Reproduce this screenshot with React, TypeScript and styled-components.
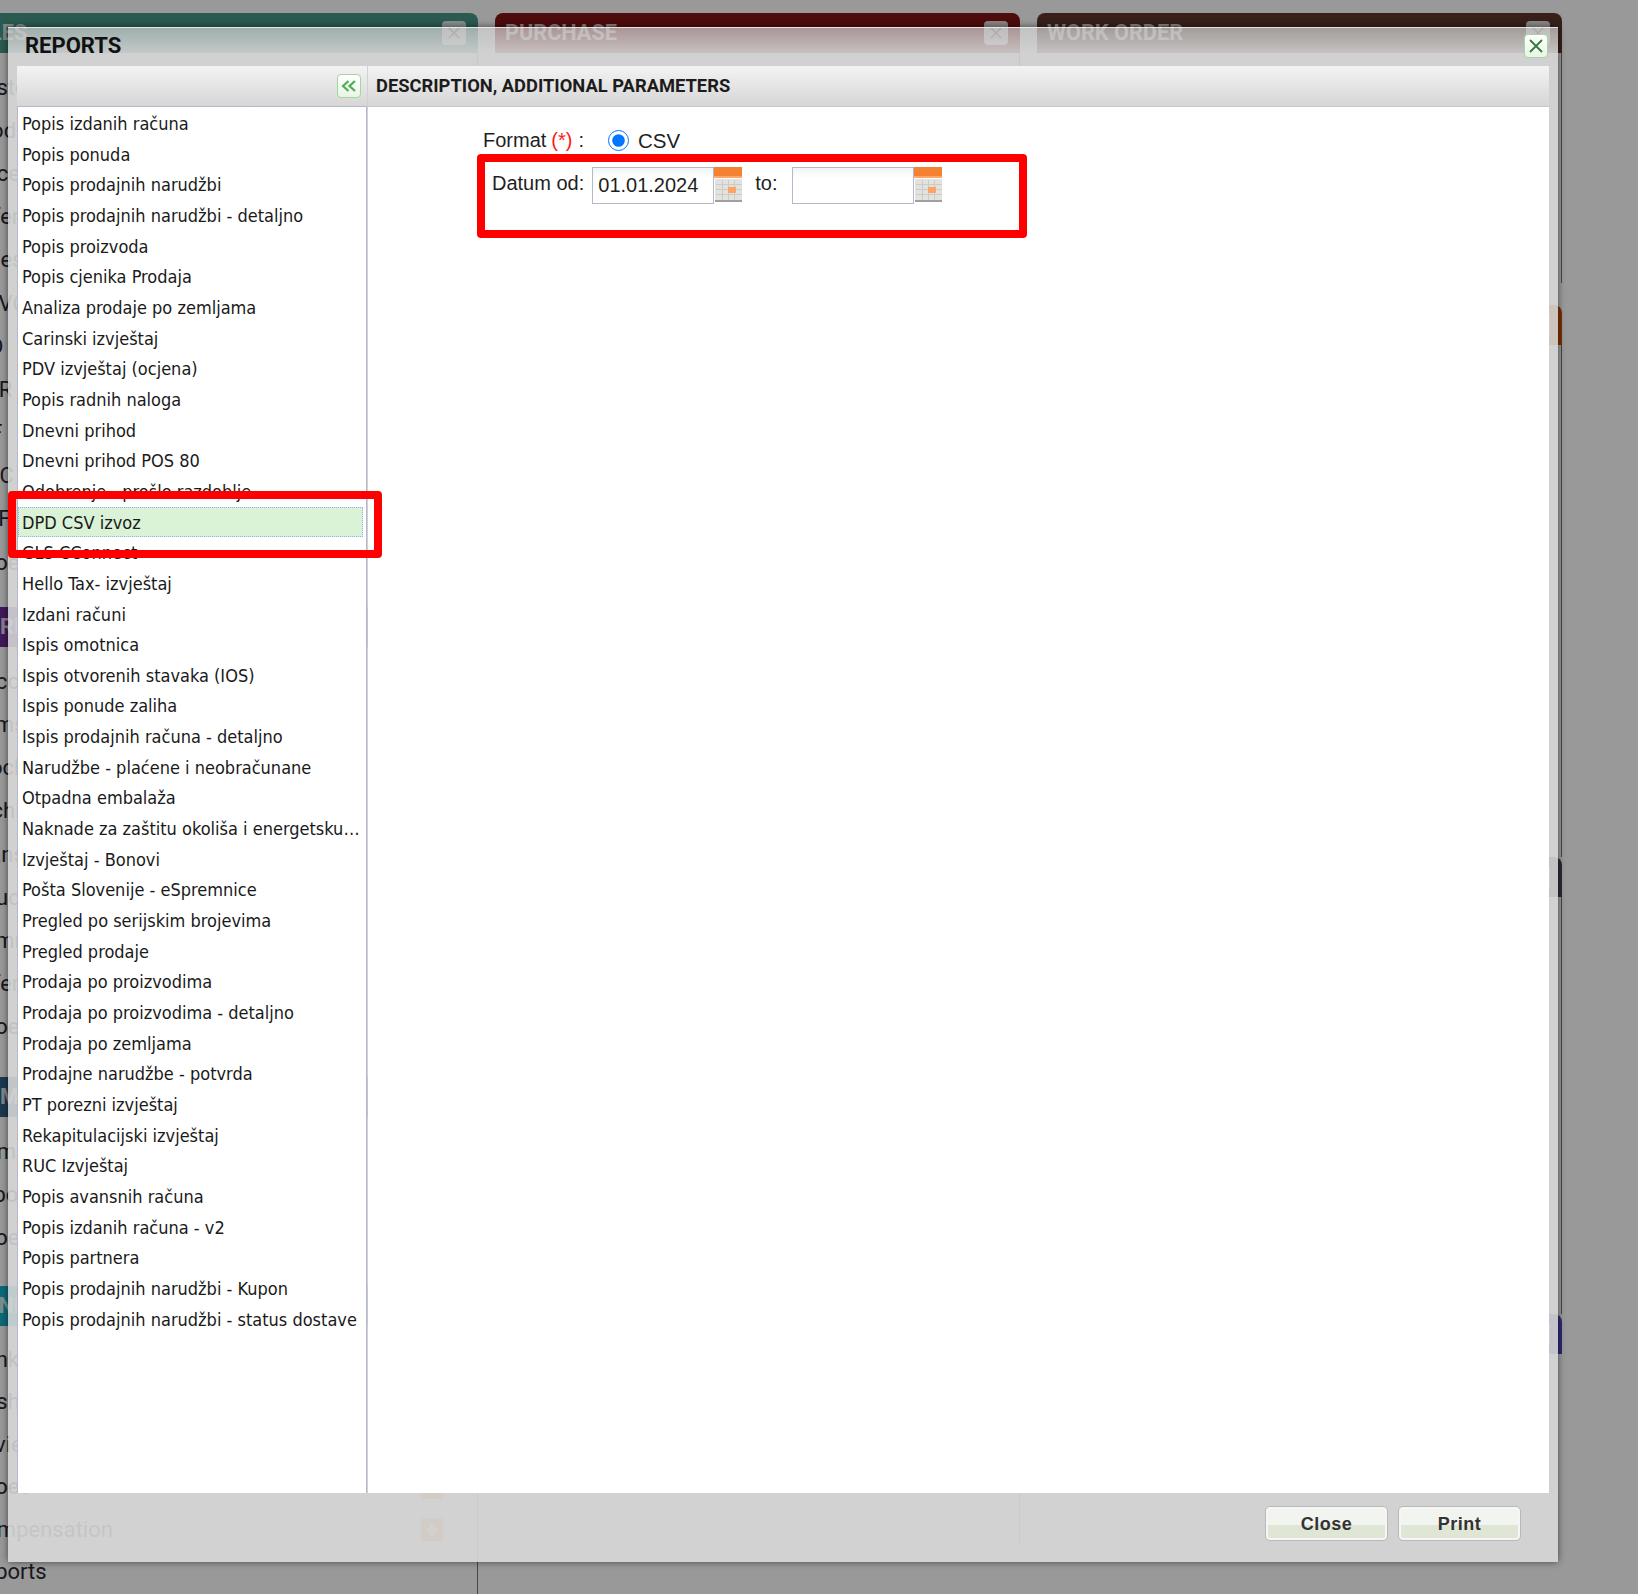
import React from "react";
import styled, { createGlobalStyle } from "styled-components";

const Global = createGlobalStyle`
  html, body { margin: 0; padding: 0; background: #fff; }
  body { width: 1638px; height: 1594px; overflow: hidden; font-family: Roboto, "Liberation Sans", sans-serif; }
`;

const Page = styled.div`
  position: relative;
  width: 1638px;
  height: 1594px;
  overflow: hidden;
  background: #fff;
`;
const Columns = styled.div`
  display: grid;
  grid-template-columns: 508px 525px 525px;
  column-gap: 17px;
  align-items: start;
  margin-left: -30px;
  padding-top: 13px;
`;
const Column = styled.div`
  display: flex;
  flex-direction: column;
`;
const Section = styled.section<{ $gap?: number }>`
  display: flex;
  flex-direction: column;
  margin-bottom: ${(p) => p.$gap ?? 22}px;
`;
const SectionBar = styled.div<{ $color: string }>`
  height: 40px;
  border-radius: 8px 8px 0 0;
  background: ${(p) => p.$color};
  color: #fff;
  font: 700 21.7px/38px Roboto, sans-serif;
  padding: 0 10px;
  display: flex;
  align-items: center;
  justify-content: space-between;
  flex: none;
`;
const BarTitle = styled.span<{ $shift?: number }>`
  margin-left: ${(p) => p.$shift ?? 0}px;
  opacity: 0.8;
`;
const BarClose = styled.span`
  width: 24px;
  height: 24px;
  border-radius: 4px;
  background: rgba(255, 255, 255, 0.85);
  display: flex;
  align-items: center;
  justify-content: center;
  color: #777;
  margin-right: 2px;
`;
const SectionBody = styled.div<{ $height?: number; $open?: boolean }>`
  display: flex;
  flex-direction: column;
  padding: 13px 0 6px;
  border-right: ${(p) => (p.$open ? "none" : "1px solid #777")};
  min-height: ${(p) => p.$height ?? 0}px;
`;
const Row = styled.div<{ $height: number }>`
  height: ${(p) => p.$height}px;
  flex: none;
  display: flex;
  align-items: center;
  justify-content: space-between;
  padding-right: 34px;
  font: 400 22px/1 Roboto, sans-serif;
  color: #2a2a35;
`;
const PlusButton = styled.span`
  width: 22px;
  height: 23px;
  border-radius: 3px;
  background: #ff9a40;
  color: #fff;
  display: flex;
  align-items: center;
  justify-content: center;
  font-weight: 700;
  font-size: 22px;
`;

const Overlay = styled.div`
  position: absolute;
  inset: 0;
  background: rgba(0, 0, 0, 0.4);
`;

const Dialog = styled.div`
  position: absolute;
  left: 8px;
  top: 27px;
  width: 1550px;
  height: 1535px;
  display: flex;
  flex-direction: column;
  box-shadow: 0 0 7px rgba(0, 0, 0, 0.55);
  border-radius: 3px;
`;
const TitleBar = styled.div`
  height: 39px;
  flex: none;
  display: flex;
  align-items: center;
  justify-content: space-between;
  padding: 0 10px 2px 17px;
  border-top: 1px solid rgba(255, 255, 255, 0.55);
  box-sizing: border-box;
  background: linear-gradient(rgba(214, 214, 214, 0.68), rgba(216, 216, 216, 0.88) 65%, rgba(216, 216, 216, 0.88));
`;
const Title = styled.h1`
  margin: 0;
  font: 700 22px/1 Roboto, sans-serif;
  color: #111;
`;
const IconButton = styled.button`
  width: 24px;
  height: 24px;
  padding: 0;
  border-radius: 4px;
  border: 1px solid #a6d6a0;
  background: linear-gradient(#ffffff, #e9f4e6);
  display: flex;
  align-items: center;
  justify-content: center;
  color: #2f7a3d;
`;
const Body = styled.div`
  flex: 1;
  min-height: 0;
  display: grid;
  grid-template-columns: 350px 1fr;
  column-gap: 1px;
  padding: 0 9px;
  background: rgba(216, 216, 216, 0.88);
`;
const Pane = styled.div`
  display: flex;
  flex-direction: column;
  min-height: 0;
  background: #fff;
`;
const PaneHeader = styled.div`
  height: 41px;
  flex: none;
  box-sizing: border-box;
  display: flex;
  align-items: center;
  background: linear-gradient(#f3f3f3, #d6d6d6);
  border-bottom: 1px solid #c9c9c9;
`;
const ListHeader = styled(PaneHeader)`
  justify-content: flex-end;
  padding-right: 6px;
  border-bottom: 1px solid #b5b8cc;
`;
const DetailHeader = styled(PaneHeader)`
  padding-left: 8px;
  font: 700 18.33px/1 Roboto, sans-serif;
  color: #1c1c1c;
`;
const List = styled.div`
  flex: 1;
  padding-top: 1px;
  border-left: 1px solid #b5b8cc;
  border-right: 1px solid #b5b8cc;
  display: flex;
  flex-direction: column;
`;
const ListRow = styled.div<{ $selected?: boolean }>`
  position: relative;
  height: 30.67px;
  flex: none;
  box-sizing: border-box;
  margin-right: 3px;
  padding: 0 1px 0 4px;
  font: 400 18px/31px "DejaVu Sans Condensed", "DejaVu Sans", sans-serif;
  font-stretch: condensed;
  color: #1a1a1a;
  white-space: nowrap;
  overflow: ${(p) => (p.$selected ? "visible" : "hidden")};
  text-overflow: ellipsis;
  background: ${(p) => (p.$selected ? "#daf2d6" : "transparent")};
  outline: ${(p) => (p.$selected ? "1px dotted #8fb0e8" : "none")};
  outline-offset: -1px;
`;
const ListMark = styled.div`
  position: absolute;
  left: -10px;
  top: -16px;
  width: 374px;
  height: 67px;
  box-sizing: border-box;
  border: 8px solid #ff0000;
  border-radius: 4px;
  z-index: 2;
`;
const Form = styled.div`
  padding: 19px 0 0 115px;
  font: 400 20px/26px "Liberation Sans", sans-serif;
  color: #1f1f1f;
`;
const FormatRow = styled.div`
  display: flex;
  align-items: center;
  height: 28px;
`;
const Required = styled.span`
  color: #ff1a1a;
  margin: 0 6px 0 5px;
`;
const Radio = styled.input`
  width: 21px;
  height: 21px;
  margin: 0 9px 0 24px;
`;
const RadioLabel = styled.span`
  font-size: 20.5px;
  padding-top: 2px;
`;
const DateBlock = styled.div`
  position: relative;
  width: 550px;
  height: 84px;
  box-sizing: border-box;
  margin: 0 0 0 -6px;
  padding: 13px 0 0 15px;
  display: flex;
  align-items: flex-start;
`;
const DateMark = styled.div`
  position: absolute;
  inset: 0;
  border: 8px solid #ff0000;
  border-radius: 4px;
`;
const DateLabel = styled.span<{ $after: number; $before?: number }>`
  margin: 0 ${(p) => p.$after}px 0 ${(p) => p.$before ?? 0}px;
  line-height: 32px;
`;
const DateInput = styled.input`
  width: 122px;
  height: 37px;
  box-sizing: border-box;
  border: 1px solid #b5b8cc;
  padding: 0 5px 1px;
  font: 400 20px "Liberation Sans", sans-serif;
  color: #1f1f1f;
  background: linear-gradient(#f2f4f4, #ffffff 30%);
  outline: none;
`;
const Footer = styled.div`
  height: 69px;
  flex: none;
  box-sizing: border-box;
  display: flex;
  justify-content: flex-end;
  gap: 10px;
  padding: 13px 37px 0 0;
  background: rgba(216, 216, 216, 0.9);
`;
const ActionButton = styled.button`
  width: 123px;
  height: 35px;
  padding: 0;
  border-radius: 5px;
  border: 1px solid #b9b9b9;
  box-shadow: inset 0 0 0 2px #f6f6f6;
  background: linear-gradient(#f2f4f0 0 56%, #e0e6d6 56% 100%);
  font: 700 18px/1 "Liberation Sans", sans-serif;
  letter-spacing: 0.5px;
  color: #333;
`;

const CalendarIcon = () => (
  <svg width="28" height="36" viewBox="0 0 28 36">
    <rect x="0" y="0" width="28" height="11" fill="#f58233" />
    <rect x="0" y="9" width="28" height="2" fill="#ffa66a" />
    <rect x="1" y="12" width="27" height="21" fill="#e2e2df" />
    {[8, 14, 20].map((x) => (
      <rect key={x} x={x} y="13" width="1" height="20" fill="#cbcbc8" />
    ))}
    {[17, 22, 27].map((y) => (
      <rect key={y} x="2" y={y} width="26" height="1" fill="#cbcbc8" />
    ))}
    <rect x="14" y="20" width="8" height="6" fill="#ffa366" />
    <rect x="1" y="33" width="27" height="2" fill="#9f9f9f" />
  </svg>
);
const CloseGlyph = ({ size = 16 }: { size?: number }) => (
  <svg width={size} height={size} viewBox="0 0 16 16" fill="none" stroke="currentColor" strokeWidth="1.8">
    <path d="M2 2 L14 14 M14 2 L2 14" />
  </svg>
);
const CollapseGlyph = () => (
  <svg width="16" height="14" viewBox="0 0 16 14" fill="none" stroke="#4caf50" strokeWidth="2.2">
    <path d="M7.5 2 L2 7 L7.5 12 M14 2 L8.5 7 L14 12" />
  </svg>
);

const reports = [
  "Popis izdanih računa",
  "Popis ponuda",
  "Popis prodajnih narudžbi",
  "Popis prodajnih narudžbi - detaljno",
  "Popis proizvoda",
  "Popis cjenika Prodaja",
  "Analiza prodaje po zemljama",
  "Carinski izvještaj",
  "PDV izvještaj (ocjena)",
  "Popis radnih naloga",
  "Dnevni prihod",
  "Dnevni prihod POS 80",
  "Odobrenje - prošlo razdoblje",
  "DPD CSV izvoz",
  "GLS CConnect",
  "Hello Tax- izvještaj",
  "Izdani računi",
  "Ispis omotnica",
  "Ispis otvorenih stavaka (IOS)",
  "Ispis ponude zaliha",
  "Ispis prodajnih računa - detaljno",
  "Narudžbe - plaćene i neobračunane",
  "Otpadna embalaža",
  "Naknade za zaštitu okoliša i energetsku efikasnost",
  "Izvještaj - Bonovi",
  "Pošta Slovenije - eSpremnice",
  "Pregled po serijskim brojevima",
  "Pregled prodaje",
  "Prodaja po proizvodima",
  "Prodaja po proizvodima - detaljno",
  "Prodaja po zemljama",
  "Prodajne narudžbe - potvrda",
  "PT porezni izvještaj",
  "Rekapitulacijski izvještaj",
  "RUC Izvještaj",
  "Popis avansnih računa",
  "Popis izdanih računa - v2",
  "Popis partnera",
  "Popis prodajnih narudžbi - Kupon",
  "Popis prodajnih narudžbi - status dostave",
];

const leftSections = [
  {
    title: "SALES",
    shift: -18,
    color: "#469685",
    gap: 17,
    rowHeight: 43.2,
    rows: ["Customers", "Products", "Prices", "Offers", "Sales", "ADVOK", "ISD", "ORR", "CIF", "DOC", "PDF", "Shoes"],
  },
  {
    title: "REPORTS",
    shift: 20,
    color: "#692b96",
    gap: 22,
    rowHeight: 43.2,
    rows: ["Account", "Items", "Stocking", "Archive", "Transfer", "Voucher", "Summary", "Offer", "Shoes"],
  },
  { title: "MM", shift: 20, color: "#2f6085", gap: 20, rowHeight: 43.2, rows: ["Admin", "Export", "Shoes"] },
  {
    title: "BANK",
    shift: -10,
    color: "#14b1c8",
    gap: 0,
    rowHeight: 42.5,
    rows: ["Bank", "Cash", "Review", "Shoes", "Compensation", "Reports"],
  },
];

const plainColumn = (items: { title: string; color: string; height: number; gap: number; open?: boolean }[]) => (
  <Column>
    {items.map((s) => (
      <Section key={s.title} $gap={s.gap}>
        <SectionBar $color={s.color}>
          <BarTitle>{s.title}</BarTitle>
          <BarClose>
            <CloseGlyph size={14} />
          </BarClose>
        </SectionBar>
        <SectionBody $height={s.height} $open={s.open} />
      </Section>
    ))}
  </Column>
);

export default function App() {
  return (
    <Page>
      <Global />
      <Columns>
        <Column>
          {leftSections.map((s) => (
            <Section key={s.title} $gap={s.gap}>
              <SectionBar $color={s.color}>
                <BarTitle $shift={s.shift}>{s.title}</BarTitle>
                <BarClose>
                  <CloseGlyph size={14} />
                </BarClose>
              </SectionBar>
              <SectionBody>
                {s.rows.map((r) => (
                  <Row key={r} $height={s.rowHeight}>
                    <span>{r}</span>
                    {r !== "Reports" && <PlusButton>+</PlusButton>}
                  </Row>
                ))}
              </SectionBody>
            </Section>
          ))}
        </Column>
        {plainColumn([{ title: "PURCHASE", color: "#821414", height: 1470, gap: 0 }])}
        {plainColumn([
          { title: "WORK ORDER", color: "#5d362b", height: 211, gap: 22 },
          { title: "SERVICE", color: "#cc5000", height: 493, gap: 0 },
          { title: "FINANCE", color: "#464658", height: 398, gap: 0 },
          { title: "SETTINGS", color: "#4d46bb", height: 170, gap: 0, open: true },
        ])}
      </Columns>
      <Overlay />
      <Dialog>
        <TitleBar>
          <Title>REPORTS</Title>
          <IconButton aria-label="Close">
            <CloseGlyph />
          </IconButton>
        </TitleBar>
        <Body>
          <Pane>
            <ListHeader>
              <IconButton aria-label="Collapse">
                <CollapseGlyph />
              </IconButton>
            </ListHeader>
            <List>
              {reports.map((r) => (
                <ListRow key={r} $selected={r === "DPD CSV izvoz"}>
                  {r}
                  {r === "DPD CSV izvoz" && <ListMark />}
                </ListRow>
              ))}
            </List>
          </Pane>
          <Pane>
            <DetailHeader>DESCRIPTION, ADDITIONAL PARAMETERS</DetailHeader>
            <Form>
              <FormatRow>
                Format<Required>(*)</Required>:
                <Radio type="radio" name="format" defaultChecked />
                <RadioLabel>CSV</RadioLabel>
              </FormatRow>
              <DateBlock>
                <DateMark />
                <DateLabel $after={8}>Datum od:</DateLabel>
                <DateInput defaultValue="01.01.2024" />
                <CalendarIcon />
                <DateLabel $after={14} $before={13}>to:</DateLabel>
                <DateInput defaultValue="" />
                <CalendarIcon />
              </DateBlock>
            </Form>
          </Pane>
        </Body>
        <Footer>
          <ActionButton>Close</ActionButton>
          <ActionButton>Print</ActionButton>
        </Footer>
      </Dialog>
    </Page>
  );
}
